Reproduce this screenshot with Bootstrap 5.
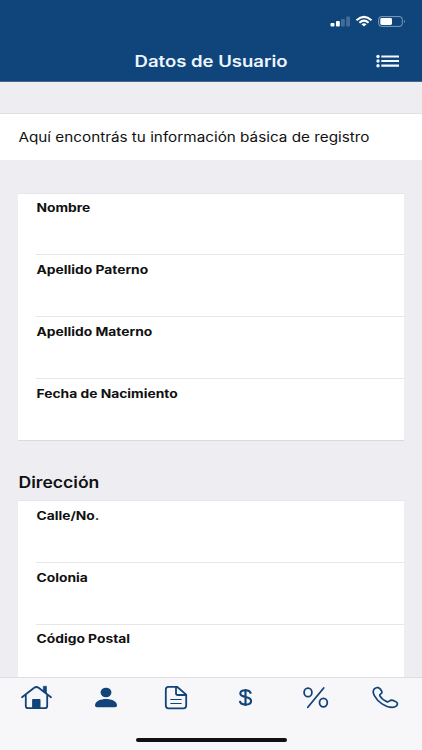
<!DOCTYPE html>
<html lang="es">
<head>
<meta charset="utf-8">
<meta name="viewport" content="width=device-width, initial-scale=1">
<title>Datos de Usuario</title>
<link rel="stylesheet" href="https://cdn.jsdelivr.net/npm/bootstrap@5.3.0/dist/css/bootstrap.min.css">
<style>
body{font-family:Inter,"Liberation Sans",sans-serif;background:#eeedf2;color:#111;height:750px}
svg{display:block}
.wide{display:inline-block;transform-origin:0 50%;white-space:nowrap}
.app-header{height:82px;background:#0f457b;border-bottom:1px solid #48678f}
.status{height:42px;padding:15px 16px 0 0}
.title-bar{height:39px}
.title{font-size:15.5px;font-weight:600;line-height:20px;color:#eef6ff;margin:0;transform:scaleX(1.195);transform-origin:50% 50%}
.menu-btn{width:24px;height:14px;margin-right:22px;margin-top:-2px}
.intro{margin-top:31px;height:47px;border-top:1px solid #dfdfe4;font-size:13px;line-height:20px;padding:13px 18px 0}
.intro .wide{transform:translateX(.4px) scaleX(1.175)}
.panel{margin:0 18px;background:#fff;border-top:1px solid #e6e5ea;border-bottom:1px solid #d9d9de}
.personal{margin-top:33px}
.panel .field{height:62px;margin-left:18px;padding-top:7px;font-size:11.2px;font-weight:700;line-height:16px;color:#111}
.panel .field:first-child{height:60px;padding-top:6px}
.panel.address .field:first-child{height:61px;padding-top:7px}
.panel .field+.field{border-top:1px solid #e6e6e9}
.panel.address .field:last-child{padding-top:6px}
.panel .wide{transform:translateX(.5px) scaleX(1.235)}
.heading{font-size:15.5px;font-weight:600;line-height:20px;margin:32px 0 7px 18px}
.heading .wide{transform:translateX(.5px) scaleX(1.135)}
.tabs{height:73px;background:#f7f7fa;border-top:1px solid #dedee2;color:#114479}
.home-bar{width:151px;height:4px;border-radius:2px;background:#111;margin:12px auto 0}
</style>
<script src="https://cdn.jsdelivr.net/npm/bootstrap@5.3.0/dist/js/bootstrap.bundle.min.js"></script>
</head>
<body class="d-flex flex-column overflow-hidden">
<header class="app-header flex-shrink-0">
  <div class="status d-flex justify-content-end">
    <svg width="76" height="14" viewBox="330 15 76 14" fill="#fff">
      <rect x="330.5" y="23" width="4" height="3.6" rx="1"/><rect x="336" y="21" width="3.8" height="5.6" rx="1"/>
      <rect x="341" y="19" width="3.8" height="7.6" rx="1" opacity=".22"/><rect x="346.200" y="16.600" width="3.800" height="10" rx="1" opacity=".22"/>
      <g fill="none" stroke="#fff" stroke-width="2.100"><path d="M356.500 20.200Q364 13.600 371.500 20.200"/><path d="M359.400 22.700Q364 18.700 368.600 22.700"/></g>
      <path d="M361.400 24.300Q364 22.300 366.600 24.300L364 26.500Z"/>
      <rect x="378.700" y="16.600" width="23.600" height="9.800" rx="2.800" fill="none" stroke="#fff" opacity=".48"/>
      <rect x="380.300" y="18.100" width="11.700" height="6.800" rx="1.300"/><path d="M404 19.700Q405.800 21.500 404 23.300Z" opacity=".55"/>
    </svg>
  </div>
  <div class="title-bar position-relative d-flex align-items-center justify-content-center">
    <h1 class="title">Datos de Usuario</h1>
    <button class="menu-btn btn p-0 border-0 position-absolute end-0" aria-label="Menú">
      <svg width="24" height="14" viewBox="0 0 24 14" fill="#f3f9ff"><circle cx="2" cy="2.500" r="1.700"/><circle cx="2" cy="7" r="1.700"/><circle cx="2" cy="11.700" r="1.700"/><path d="M5.300 1.500H23v2.100H5.300zM5.300 6H23V8.100H5.300zM5.300 10.600H23v2.100H5.300z"/></svg>
    </button>
  </div>
</header>
<main class="flex-grow-1 overflow-hidden">
  <section class="intro bg-white"><span class="wide">Aquí encontrás tu información básica de registro</span></section>
  <section class="panel personal">
    <div class="field"><span class="wide">Nombre</span></div>
    <div class="field"><span class="wide">Apellido Paterno</span></div>
    <div class="field"><span class="wide">Apellido Materno</span></div>
    <div class="field"><span class="wide">Fecha de Nacimiento</span></div>
  </section>
  <h2 class="heading"><span class="wide">Dirección</span></h2>
  <section class="panel address">
    <div class="field"><span class="wide">Calle/No.</span></div>
    <div class="field"><span class="wide">Colonia</span></div>
    <div class="field"><span class="wide">Código Postal</span></div>
  </section>
</main>
<footer class="tabs flex-shrink-0">
  <nav class="d-flex" aria-label="Principal">
    <svg width="422" height="48" viewBox="0 678 422 48" fill="none" stroke="#114479" stroke-width="1.800" stroke-linecap="round" stroke-linejoin="round">
      <path d="M22 697.300 34.200 687.800Q36.400 686.200 38.600 687.800L51 697.300M25.800 695V706Q25.800 708.200 28 708.200H45Q47.200 708.200 47.200 706V695"/>
      <path d="M43.300 691V686.300H46.500V693.700Z" fill="#114479" stroke-width=".6"/>
      <path d="M33 699.500h7v8.200h-7z" fill="#114479" stroke-width="1"/>
      <ellipse cx="106" cy="692.500" rx="5.400" ry="4.800" fill="#114479" stroke="none"/>
      <path d="M95 705.500C95 701 101 699 106 699S117 701 117 705.500Q117 707.200 115 707.200H97Q95 707.200 95 705.500Z" fill="#114479" stroke="none"/>
      <path d="M168.500 686.800H177L186.200 694.600V705.500Q186.200 708.300 183.400 708.300H168.600Q165.800 708.300 165.800 705.500V689.500Q165.800 686.800 168.500 686.800ZM176 687V693.200Q176 695 178 695H186"/>
      <path d="M170.800 699.500h10.400M170.800 703.500h10.400" stroke-width="1.200"/>
      <path d="M250.800 693.700C250.400 691.500 248.300 690.300 245.500 690.300C242.400 690.300 240.300 691.600 240.300 693.600C240.300 698.500 251.100 695.300 251.100 700.900C251.100 703.200 248.800 704.500 245.500 704.500C242.200 704.500 240.100 703.100 239.900 700.800M245.500 689V706" stroke-width="2.100" stroke-linecap="butt"/>
      <ellipse cx="308" cy="692.400" rx="3.900" ry="4.300"/><ellipse cx="323.400" cy="702.600" rx="3.900" ry="4.300"/><path d="M323.700 688 307.800 707.200"/>
      <path d="M376.200 687.800C373 688.900 372.400 692 374.200 695.300C377.800 702 385.500 707.400 392.300 707.400C395.500 707.300 397.800 705.300 397.400 703.300C397 702 393.200 700.300 391.300 700.200C389.500 700.300 388.800 702.300 387.200 701.900C384 700.600 381.200 698.300 379.700 695.700C379.300 694.300 382 693.700 382 692.200C381.700 690.500 379.700 688 378.200 687.600Q377.200 687.400 376.200 687.800Z" stroke-width="1.700"/>
    </svg>
  </nav>
  <div class="home-bar"></div>
</footer>
</body>
</html>
